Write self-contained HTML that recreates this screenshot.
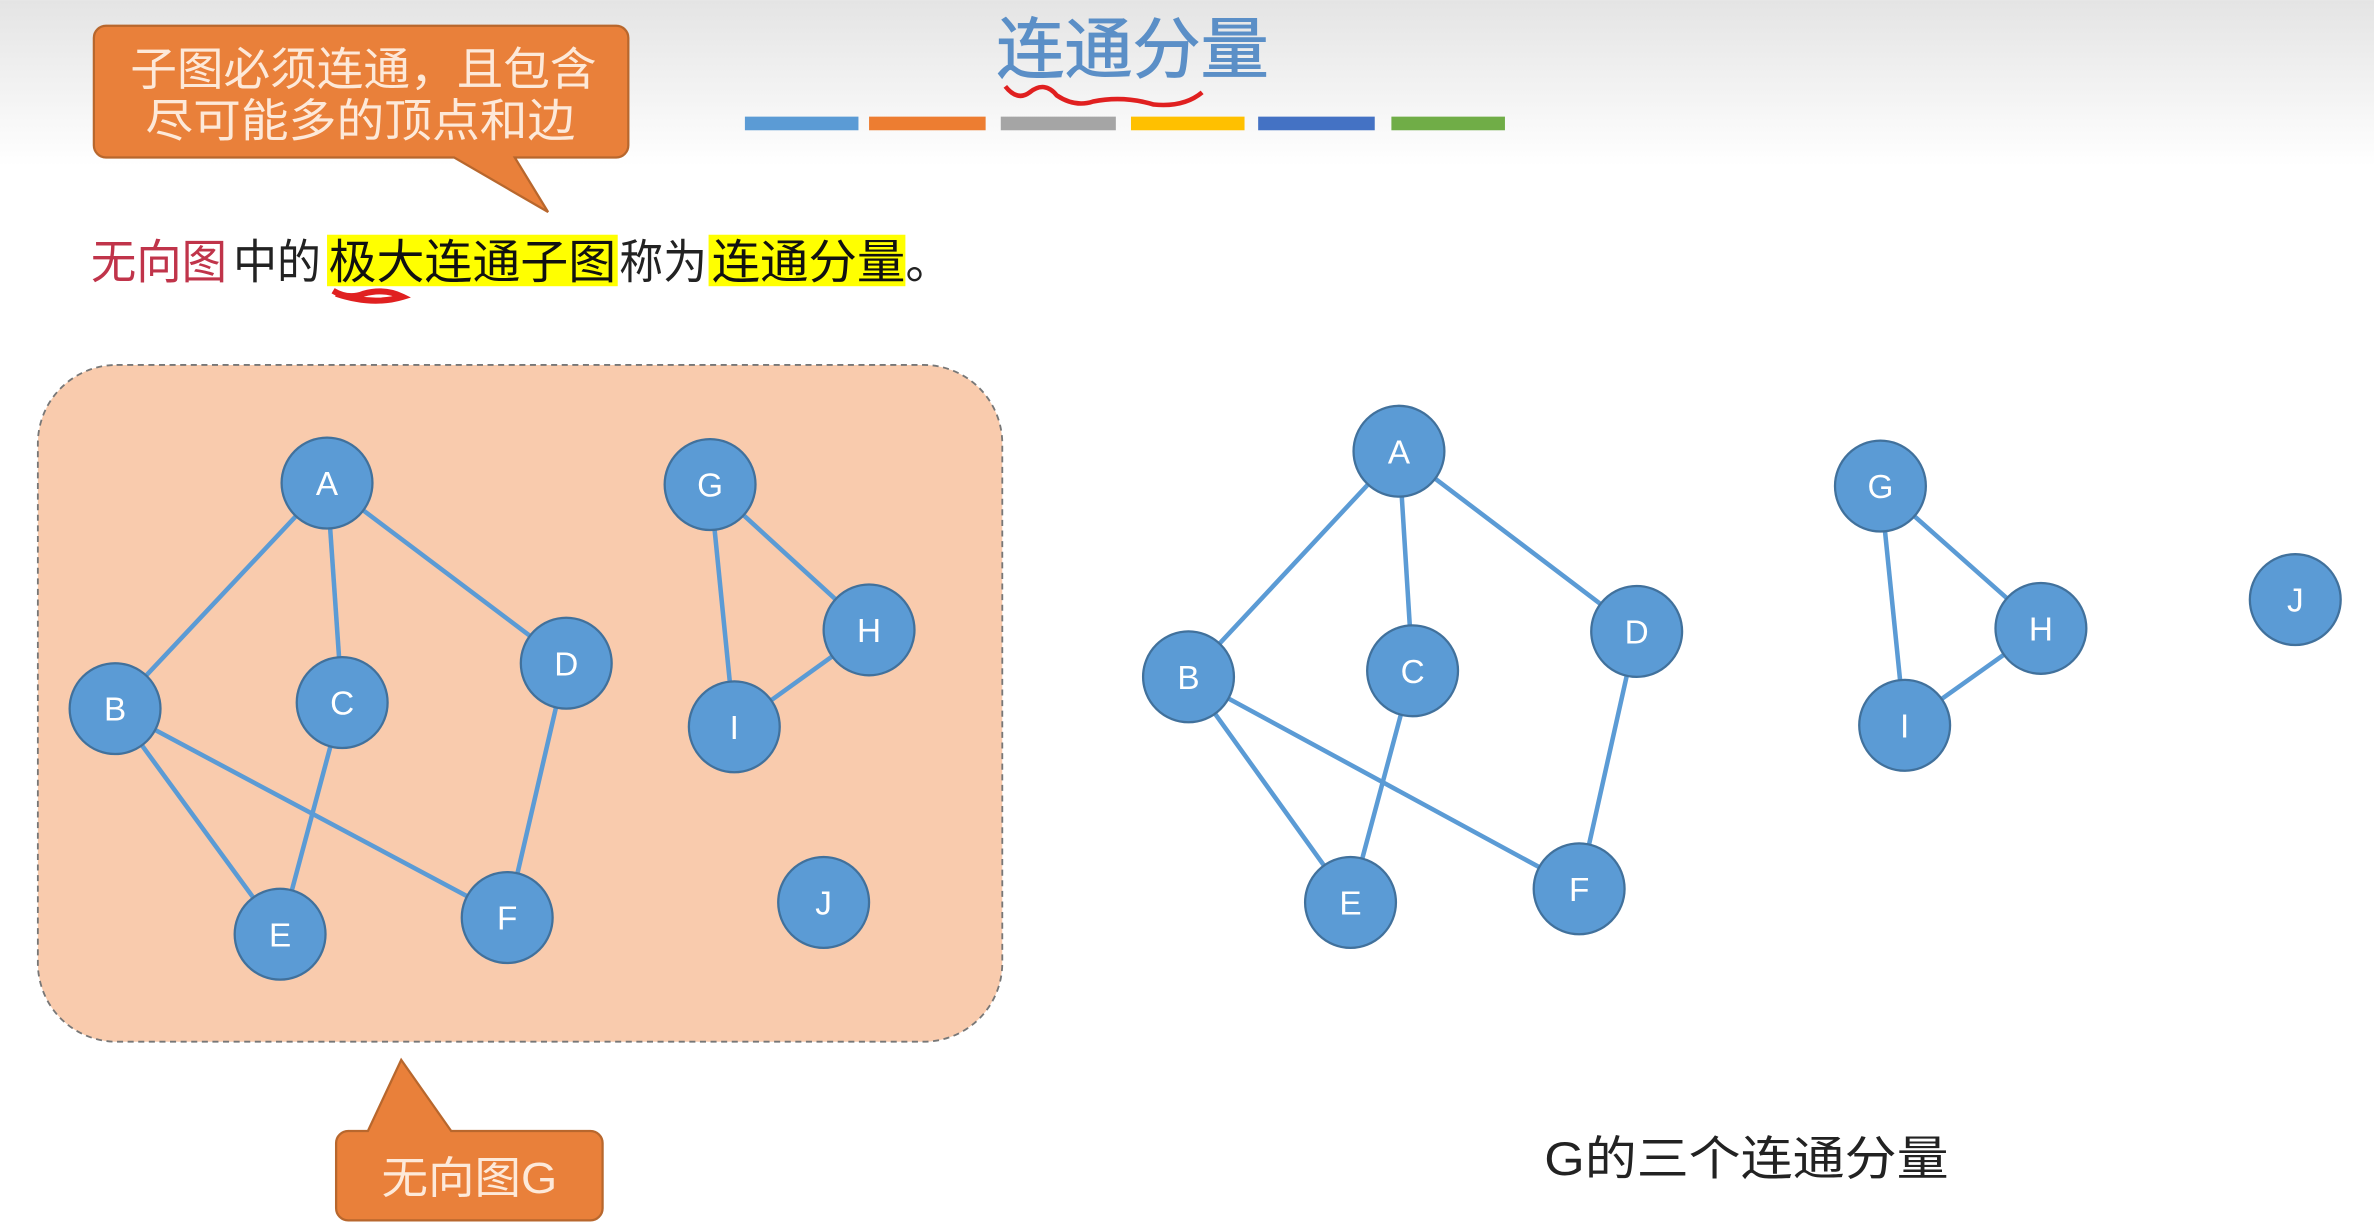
<!DOCTYPE html>
<html><head><meta charset="utf-8"><style>
html,body{margin:0;padding:0;background:#fff;}
svg{display:block}
text{font-family:"Liberation Sans","Noto Sans CJK SC",sans-serif;}
</style></head><body>
<svg width="2374" height="1228" viewBox="0 0 1568 811" xmlns="http://www.w3.org/2000/svg">
<defs>
<linearGradient id="bg" x1="0" y1="0" x2="0" y2="1">
<stop offset="0" stop-color="#e4e4e4"/><stop offset="1" stop-color="#ffffff"/>
</linearGradient>
<g id="n"><circle r="30" fill="#5b9bd5" stroke="#41719c" stroke-width="1.5"/></g>
</defs>
<rect width="1568" height="811" fill="#fff"/>
<rect width="1568" height="110" fill="url(#bg)"/>
<text x="658" y="48" textLength="180" lengthAdjust="spacingAndGlyphs" font-size="44" fill="#5b8fc7" stroke="#5b8fc7" stroke-width="0.6">连通分量</text>
<path d="M664 57 q8 10 16 4 q10 -8 18 2 q12 8 24 4 q20 -4 40 2 q20 2 32 -8" stroke="#e02020" stroke-width="3" fill="none"/>
<g>
<rect x="492" y="77" width="75" height="9" fill="#5b9bd5"/>
<rect x="574" y="77" width="77" height="9" fill="#ed7d31"/>
<rect x="661" y="77" width="76" height="9" fill="#a5a5a5"/>
<rect x="747" y="77" width="75" height="9" fill="#ffc000"/>
<rect x="831" y="77" width="77" height="9" fill="#4472c4"/>
<rect x="919" y="77" width="75" height="9" fill="#70ad47"/>
</g>
<path d="M70 17 H407 a8 8 0 0 1 8 8 V96 a8 8 0 0 1 -8 8 H340 L362 140 L300 104 H70 a8 8 0 0 1 -8 -8 V25 a8 8 0 0 1 8 -8z" fill="#e9803a" stroke="#b8672d" stroke-width="1.5"/>
<text x="86" y="56" textLength="308" lengthAdjust="spacingAndGlyphs" font-size="30" fill="#fde9d9">子图必须连通，且包含</text>
<text x="96" y="90" textLength="284" lengthAdjust="spacingAndGlyphs" font-size="30" fill="#fde9d9">尽可能多的顶点和边</text>
<rect x="216" y="155" width="192" height="34" fill="#ffff00"/>
<rect x="468" y="155" width="130" height="34" fill="#ffff00"/>
<g font-size="31">
<text x="60" y="184" textLength="90" lengthAdjust="spacingAndGlyphs" fill="#c0344a">无向图</text>
<text x="154" y="184" textLength="58" lengthAdjust="spacingAndGlyphs" fill="#222">中的</text>
<text x="217" y="184" textLength="190" lengthAdjust="spacingAndGlyphs" fill="#111">极大连通子图</text>
<text x="409" y="184" textLength="58" lengthAdjust="spacingAndGlyphs" fill="#222">称为</text>
<text x="470" y="184" textLength="128" lengthAdjust="spacingAndGlyphs" fill="#111">连通分量</text>
<text x="598" y="184" fill="#222">。</text>
</g>
<path d="M220 192 q10 6 20 2 q14 -4 26 2 q-20 6 -44 -2" stroke="#e02020" stroke-width="4" fill="none"/>
<rect x="25" y="241" width="637" height="447" rx="52" fill="#f9cbad" stroke="#777" stroke-width="1.2" stroke-dasharray="4 3"/>
<g stroke="#5b9bd5" stroke-width="3">
<line x1="216" y1="319" x2="76" y2="468"/><line x1="216" y1="319" x2="226" y2="464"/><line x1="216" y1="319" x2="374" y2="438"/>
<line x1="76" y1="468" x2="185" y2="617"/><line x1="76" y1="468" x2="335" y2="606"/><line x1="226" y1="464" x2="185" y2="617"/>
<line x1="374" y1="438" x2="335" y2="606"/><line x1="469" y1="320" x2="574" y2="416"/><line x1="469" y1="320" x2="485" y2="480"/><line x1="485" y1="480" x2="574" y2="416"/>
<line x1="924" y1="298" x2="785" y2="447"/><line x1="924" y1="298" x2="933" y2="443"/><line x1="924" y1="298" x2="1081" y2="417"/>
<line x1="785" y1="447" x2="892" y2="596"/><line x1="785" y1="447" x2="1043" y2="587"/><line x1="933" y1="443" x2="892" y2="596"/>
<line x1="1081" y1="417" x2="1043" y2="587"/><line x1="1242" y1="321" x2="1348" y2="415"/><line x1="1242" y1="321" x2="1258" y2="479"/><line x1="1258" y1="479" x2="1348" y2="415"/>
</g>
<g font-size="22" fill="#fff" text-anchor="middle">
<use href="#n" x="216" y="319"/><text x="216" y="327">A</text>
<use href="#n" x="76" y="468"/><text x="76" y="476">B</text>
<use href="#n" x="226" y="464"/><text x="226" y="472">C</text>
<use href="#n" x="374" y="438"/><text x="374" y="446">D</text>
<use href="#n" x="185" y="617"/><text x="185" y="625">E</text>
<use href="#n" x="335" y="606"/><text x="335" y="614">F</text>
<use href="#n" x="469" y="320"/><text x="469" y="328">G</text>
<use href="#n" x="574" y="416"/><text x="574" y="424">H</text>
<use href="#n" x="485" y="480"/><text x="485" y="488">I</text>
<use href="#n" x="544" y="596"/><text x="544" y="604">J</text>
<use href="#n" x="924" y="298"/><text x="924" y="306">A</text>
<use href="#n" x="785" y="447"/><text x="785" y="455">B</text>
<use href="#n" x="933" y="443"/><text x="933" y="451">C</text>
<use href="#n" x="1081" y="417"/><text x="1081" y="425">D</text>
<use href="#n" x="892" y="596"/><text x="892" y="604">E</text>
<use href="#n" x="1043" y="587"/><text x="1043" y="595">F</text>
<use href="#n" x="1242" y="321"/><text x="1242" y="329">G</text>
<use href="#n" x="1348" y="415"/><text x="1348" y="423">H</text>
<use href="#n" x="1258" y="479"/><text x="1258" y="487">I</text>
<use href="#n" x="1516" y="396"/><text x="1516" y="404">J</text>
</g>
<path d="M230 747 H243 L265 700 L298 747 H390 a8 8 0 0 1 8 8 V798 a8 8 0 0 1 -8 8 H230 a8 8 0 0 1 -8 -8 V755 a8 8 0 0 1 8 -8z" fill="#e9803a" stroke="#b8672d" stroke-width="1.5"/>
<text x="252" y="788" textLength="116" lengthAdjust="spacingAndGlyphs" font-size="29" fill="#fde9d9">无向图G</text>
<text x="1020" y="776" textLength="267" lengthAdjust="spacingAndGlyphs" font-size="31" fill="#222">G的三个连通分量</text>
</svg>
</body></html>
